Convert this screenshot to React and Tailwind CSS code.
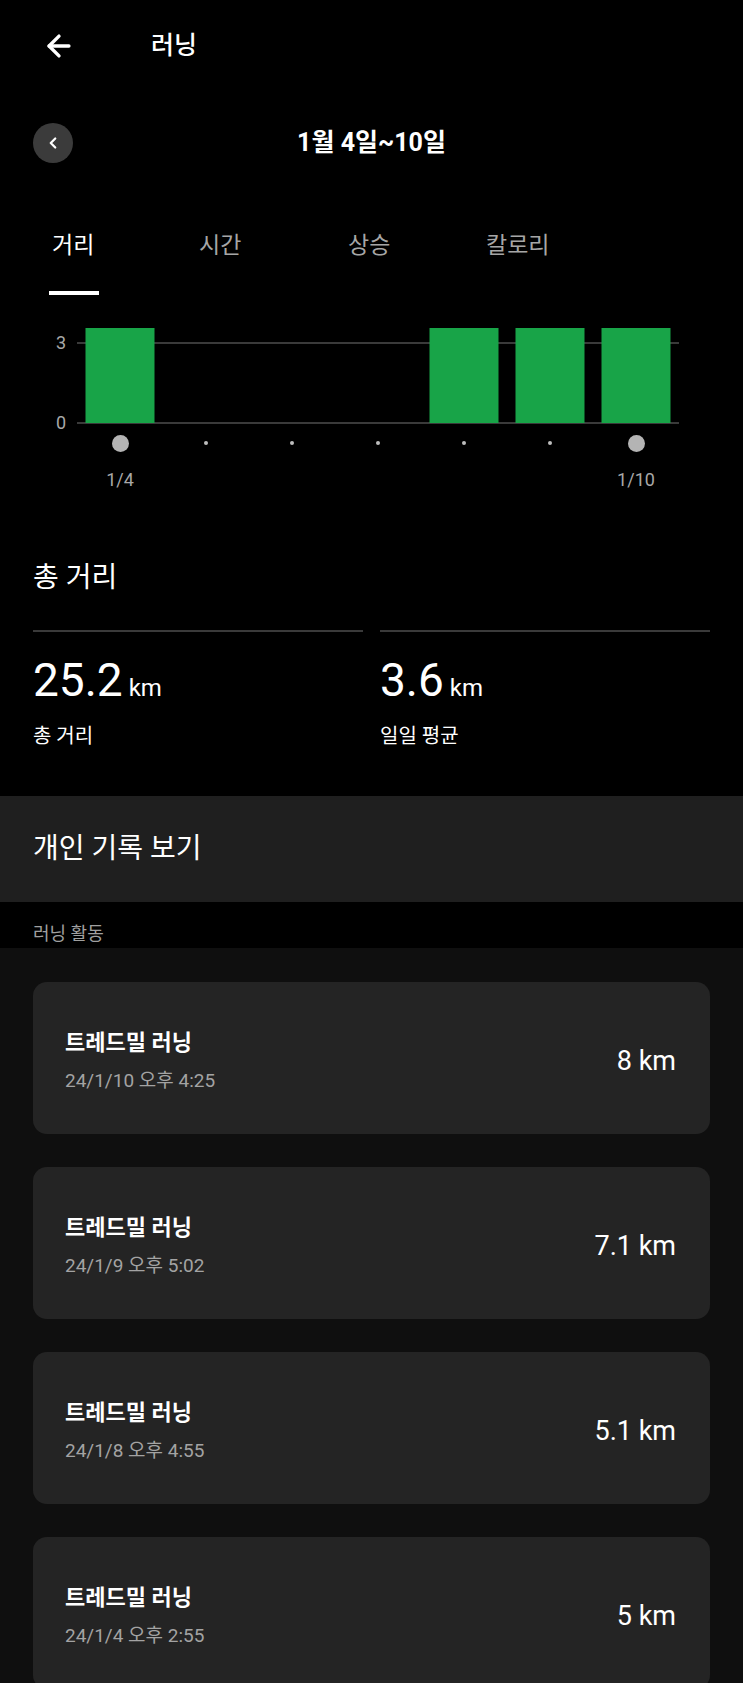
import { ArrowLeft, ChevronLeft } from "lucide-react";

const font = { fontFamily: "Roboto, 'Noto Sans CJK KR', sans-serif" };

const tabs = [
  { id: "distance", label: "거리", w: "w-[147px]" },
  { id: "time", label: "시간", w: "w-[149px]" },
  { id: "climb", label: "상승", w: "w-[138px]" },
  { id: "cal", label: "칼로리", w: "w-[100px]" },
];

const days = [
  { label: "1/4", value: 1, big: true },
  { label: "", value: 0 },
  { label: "", value: 0 },
  { label: "", value: 0 },
  { label: "", value: 1 },
  { label: "", value: 1 },
  { label: "1/10", value: 1, big: true },
];

const activities = [
  { title: "트레드밀 러닝", date: "24/1/10 오후 4:25", dist: "8 km" },
  { title: "트레드밀 러닝", date: "24/1/9 오후 5:02", dist: "7.1 km" },
  { title: "트레드밀 러닝", date: "24/1/8 오후 4:55", dist: "5.1 km" },
  { title: "트레드밀 러닝", date: "24/1/4 오후 2:55", dist: "5 km" },
];

function Chart() {
  return (
    <div className="mt-[33px] flex">
      <div className="w-[77px] pr-[11px] flex flex-col items-end text-[18px] leading-[20px] text-[#a8a8a8]">
        <span className="mt-[5px]">3</span>
        <span className="mt-[60px]">0</span>
      </div>
      <div className="w-[602px]">
        <svg width="602" height="97" viewBox="0 0 602 97">
          <line x1="0" y1="15" x2="602" y2="15" stroke="#3a3a3a" strokeWidth="2" />
          <line x1="0" y1="95" x2="602" y2="95" stroke="#3a3a3a" strokeWidth="2" />
          {days.map((d, i) =>
            d.value ? (
              <rect key={i} x={i * 86 + 8.5} y="0" width="69" height="95" fill="#18a448" />
            ) : null,
          )}
        </svg>
        <div className="flex h-[18px] mt-[9px]">
          {days.map((d, i) => (
            <div key={i} className="w-[86px] flex items-center justify-center">
              {d.big ? (
                <div className="w-[17px] h-[17px] rounded-full bg-[#b4b4b4]" />
              ) : (
                <div className="w-[4px] h-[4px] rounded-full bg-[#bdbdbd]" />
              )}
            </div>
          ))}
        </div>
        <div className="flex mt-[17px] text-[18px] leading-[22px] text-[#a8a8a8]">
          {days.map((d, i) => (
            <div key={i} className="w-[86px] text-center">
              {d.label}
            </div>
          ))}
        </div>
      </div>
    </div>
  );
}

export default function App() {
  return (
    <div className="w-[743px] min-h-[1683px] bg-[#0f0f0f] text-white overflow-hidden" style={font}>
      <div className="bg-black">
        <header className="h-[92px] flex items-center pl-[42px]">
          <ArrowLeft size={34} strokeWidth={2.4} className="text-white" />
          <h1 className="ml-[75px] text-[25px] font-medium">러닝</h1>
        </header>

        <div className="mt-[31px] px-[33px] flex items-center h-[40px]">
          <button className="w-10 h-10 rounded-full bg-[#3b3b3b] flex items-center justify-center">
            <ChevronLeft size={18} strokeWidth={3} className="text-white" />
          </button>
          <div className="flex-1 text-center text-[25px] font-bold">1월 4일~10일</div>
          <div className="w-10" />
        </div>

        <nav className="mt-[67px] pl-[52px] flex">
          {tabs.map((t, i) => (
            <div key={t.id} className={t.w}>
              <div
                className={
                  i === 0
                    ? "text-[23px] leading-[32px] text-white"
                    : "text-[23px] leading-[32px] text-[#a6a6a6]"
                }
              >
                {t.label}
              </div>
              {i === 0 && <div className="-ml-[3px] mt-[29px] w-[50px] h-[4px] bg-white" />}
            </div>
          ))}
        </nav>

        <Chart />

        <div className="mt-[70px] px-[33px] text-[28px] leading-[34px]">총 거리</div>

        <div className="mt-[35px] px-[33px] grid grid-cols-2 gap-[17px]">
          {[
            { v: "25.2", l: "총 거리" },
            { v: "3.6", l: "일일 평균" },
          ].map((s) => (
            <div key={s.l}>
              <div className="h-[2px] bg-[#3a3a3a]" />
              <div className="mt-[22px] flex items-baseline gap-[6px] leading-[52px]">
                <span className="text-[46px]">{s.v}</span>
                <span className="text-[24px]">km</span>
              </div>
              <div className="mt-[8px] text-[20px] leading-[28px]">{s.l}</div>
            </div>
          ))}
        </div>

        <div className="mt-[46px] h-[106px] bg-[#1f1f1f] flex items-center px-[33px] text-[28px]">
          개인 기록 보기
        </div>

        <div className="h-[46px] px-[33px] pt-[20px] text-[18px] leading-[24px] text-[#a0a0a0]">러닝 활동</div>
      </div>

      <div className="px-[33px] pt-[34px] flex flex-col gap-[33px]">
        {activities.map((a) => (
          <div
            key={a.date}
            className="h-[152px] rounded-[14px] bg-[#242424] flex items-center justify-between pl-[32px] pr-[34px] pt-[6px]"
          >
            <div className="flex flex-col">
              <span className="text-[22px] leading-[30px] font-bold">{a.title}</span>
              <span className="mt-[10px] text-[19px] leading-[26px] text-[#a3a3a3]">{a.date}</span>
            </div>
            <span className="text-[27px]">{a.dist}</span>
          </div>
        ))}
      </div>
    </div>
  );
}
